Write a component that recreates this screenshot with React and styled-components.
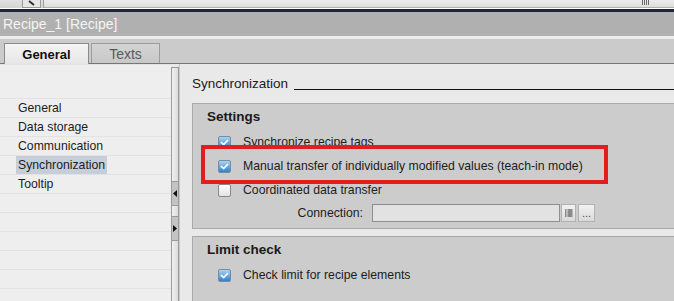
import React from "react";
import styled, { createGlobalStyle } from "styled-components";

const Global = createGlobalStyle`
  html, body { margin: 0; padding: 0; }
  body { width: 674px; height: 301px; overflow: hidden; background: #e9e9e9;
    font-family: "Liberation Sans", Arial, sans-serif; }
  #root { width: 674px; height: 301px; }
`;

const Page = styled.div`
  width: 674px; height: 301px; display: flex; flex-direction: column; overflow: hidden;
`;

const TopStrip = styled.div`
  height: 8px; flex-shrink: 0; display: flex; align-items: stretch;
  background: linear-gradient(#e2e2e2, #d4d4d4);
  border-bottom: 1px solid #ffffff;
  position: relative;
`;
const StripSpacer = styled.div` width: 22px; `;
const StripButton = styled.div`
  width: 17px; border: 1px solid #9a9a9a; border-top: none; background: #e6e6e6;
  display: flex; justify-content: center; align-items: flex-start;
`;
const StripField = styled.div`
  flex: 1; margin-left: 2px; border-left: 1px solid #9a9a9a; border-bottom: 1px solid #b0b0b0;
  background: linear-gradient(#ececec, #dedede);
`;
const Grip = styled.div`
  position: absolute; left: 642px; top: 0; width: 8px; height: 5px;
  background: repeating-linear-gradient(90deg, #666 0 1px, transparent 1px 2px);
`;

const DarkLine = styled.div` height: 3px; flex-shrink: 0; background: #1f2534; `;

const TitleBar = styled.div`
  height: 24px; flex-shrink: 0; background: #b0b0b0; color: #f4f4f4;
  font-size: 14px; display: flex; align-items: center; padding-left: 3px;
  border-bottom: 3px solid #ececec;
`;

const TabBar = styled.div`
  height: 24px; flex-shrink: 0; background: #cbcbcb; border-bottom: 1px solid #767676;
  display: flex; align-items: flex-end; padding-left: 4px; gap: 2px;
`;
const Tab = styled.div`
  height: ${p => (p.$active ? 21 : 20)}px;
  width: ${p => p.$w}px; box-sizing: border-box;
  border: 1px solid ${p => (p.$active ? "#8a8a8a" : "#9c9c9c")};
  border-bottom: none;
  background: ${p => (p.$active ? "linear-gradient(#f4f4f4, #e6e6e6)" : "linear-gradient(#d4d4d4, #c8c8c8)")};
  color: ${p => (p.$active ? "#111" : "#5a5a5a")};
  font-size: ${p => (p.$active ? 13 : 14)}px; font-weight: ${p => (p.$active ? 700 : 400)};
  display: flex; align-items: center; justify-content: center;
  margin-bottom: ${p => (p.$active ? -1 : 0)}px;
`;

const Body = styled.div` flex: 1; display: flex; min-height: 0; `;

const Nav = styled.div`
  width: 171px; background: #eeeeee; padding-top: 33px; box-sizing: border-box;
  border-top: 1px solid #e4e4e4;
  display: flex; flex-direction: column; overflow: hidden;
`;
const NavRow = styled.div`
  height: 19px; flex-shrink: 0; box-sizing: border-box;
  border-top: 1px solid #e2e2e2;
  padding-left: 16px; display: flex; align-items: stretch;
`;
const NavLabel = styled.span`
  padding: 0 2px; display: flex; align-items: center;
  font-size: 12.25px; color: #1c1c1c;
  background: ${p => (p.$selected ? "#c6ced9" : "transparent")};
`;

const Splitter = styled.div`
  width: 6px; margin-top: 3px; border: 1px solid #9a9a9a; border-bottom: none;
  background: linear-gradient(90deg, #f0f0f0, #dcdcdc);
  display: flex; flex-direction: column; padding-top: 113px; gap: 10px;
`;
const SplitBtn = styled.div`
  height: 23px; background: #c4c4c4; border-top: 1px solid #9a9a9a; border-bottom: 1px solid #9a9a9a;
  display: flex; align-items: center; justify-content: center;
`;

const Content = styled.div`
  flex: 1; padding-left: 12px; display: flex; flex-direction: column; overflow: hidden;
  border-left: 1px solid #c8c8c8;
`;
const SectionHead = styled.div`
  height: 39px; flex-shrink: 0; display: flex; align-items: center; gap: 6px;
  font-size: 13.5px; color: #1a1a1a;
`;
const HeadLine = styled.div` flex: 1; height: 1px; background: #111; margin-top: 11px; `;

const Group = styled.div`
  background: #cccccc; border: 1px solid #aaaaaa; border-right: none;
  height: ${p => p.$h}px; box-sizing: border-box; flex-shrink: 0;
  padding: 5px 0 0 14px; position: relative;
  & + & { margin-top: 7px; }
`;
const GroupTitle = styled.div`
  font-size: 13.5px; font-weight: 700; color: #1a1a1a; height: 16px; line-height: 16px;
  margin-bottom: 5px;
`;
const Row = styled.div`
  display: flex; align-items: center; height: 24px; padding-left: 11px; gap: 12px;
  font-size: 12.25px; color: #1c1c1c;
`;
const Box = styled.div`
  width: 13px; height: 13px; box-sizing: border-box; border-radius: 2px;
  border: 1px solid #7c8a99;
  background: ${p => (p.$checked ? "linear-gradient(#a6d4f5, #2f7fd0)" : "linear-gradient(#ffffff, #e2e2e2)")};
  display: flex; align-items: center; justify-content: center;
`;
const ConnRow = styled.div`
  display: flex; align-items: center; height: 22px;
  font-size: 12.25px; color: #1c1c1c;
`;
const ConnLabel = styled.div` width: 165px; text-align: right; padding-right: 9px; box-sizing: border-box; `;
const Input = styled.div`
  width: 188px; height: 18px; box-sizing: border-box; border: 1px solid #8e8e8e; background: #e2e2e2;
`;
const SmallBtn = styled.div`
  width: ${p => p.$w}px; height: 18px; box-sizing: border-box; border: 1px solid #b2b2b2;
  background: linear-gradient(#f2f2f2, #dadada); margin-left: ${p => p.$ml}px;
  display: flex; align-items: center; justify-content: center;
  font-size: 11px; color: #555; line-height: 1;
`;
const Highlight = styled.div`
  position: absolute; left: 8px; top: 41px; width: 407px; height: 39px;
  box-sizing: border-box; border: 4px solid #e31d1c; pointer-events: none;
`;

const Check = () => (
  <svg width="9" height="7" viewBox="0 0 9 7"><path d="M1 3.2 L3.6 5.6 L8 1" stroke="#fff" strokeWidth="1.8" fill="none" /></svg>
);

export default function App() {
  const navItems = ["General", "Data storage", "Communication", "Synchronization", "Tooltip"];
  const rows = [...navItems, "", "", "", "", "", "", ""];
  return (
    <Page>
      <Global />
      <TopStrip>
        <StripSpacer />
        <StripButton>
          <svg width="8" height="6" viewBox="0 0 8 6"><path d="M1 1 L6 5" stroke="#333" strokeWidth="2" /></svg>
        </StripButton>
        <StripField />
        <Grip />
      </TopStrip>
      <DarkLine />
      <TitleBar>Recipe_1 [Recipe]</TitleBar>
      <TabBar>
        <Tab $active $w={85}>General</Tab>
        <Tab $w={69}>Texts</Tab>
      </TabBar>
      <Body>
        <Nav>
          {rows.map((r, i) => (
            <NavRow key={i}>
              <NavLabel $selected={r === "Synchronization"}>{r}</NavLabel>
            </NavRow>
          ))}
        </Nav>
        <Splitter>
          <SplitBtn>
            <svg width="4" height="7" viewBox="0 0 4 7"><path d="M4 0 L0 3.5 L4 7Z" fill="#111" /></svg>
          </SplitBtn>
          <SplitBtn>
            <svg width="4" height="7" viewBox="0 0 4 7"><path d="M0 0 L4 3.5 L0 7Z" fill="#111" /></svg>
          </SplitBtn>
        </Splitter>
        <Content>
          <SectionHead>Synchronization<HeadLine /></SectionHead>
          <Group $h={126}>
            <GroupTitle>Settings</GroupTitle>
            <Row><Box $checked><Check /></Box>Synchronize recipe tags</Row>
            <Row><Box $checked><Check /></Box>Manual transfer of individually modified values (teach-in mode)</Row>
            <Row><Box />Coordinated data transfer</Row>
            <ConnRow>
              <ConnLabel>Connection:</ConnLabel>
              <Input />
              <SmallBtn $w={15} $ml={1}>
                <svg width="8" height="9" viewBox="0 0 8 9">
                  {[1, 3, 5, 7].map(y => (
                    <g key={y}><rect x="0" y={y - 0.5} width="1.5" height="1" fill="#333" /><rect x="2.5" y={y - 0.5} width="5" height="1" fill="#333" /></g>
                  ))}
                </svg>
              </SmallBtn>
              <SmallBtn $w={17} $ml={2}>...</SmallBtn>
            </ConnRow>
            <Highlight />
          </Group>
          <Group $h={80}>
            <GroupTitle>Limit check</GroupTitle>
            <Row><Box $checked><Check /></Box>Check limit for recipe elements</Row>
          </Group>
        </Content>
      </Body>
    </Page>
  );
}
